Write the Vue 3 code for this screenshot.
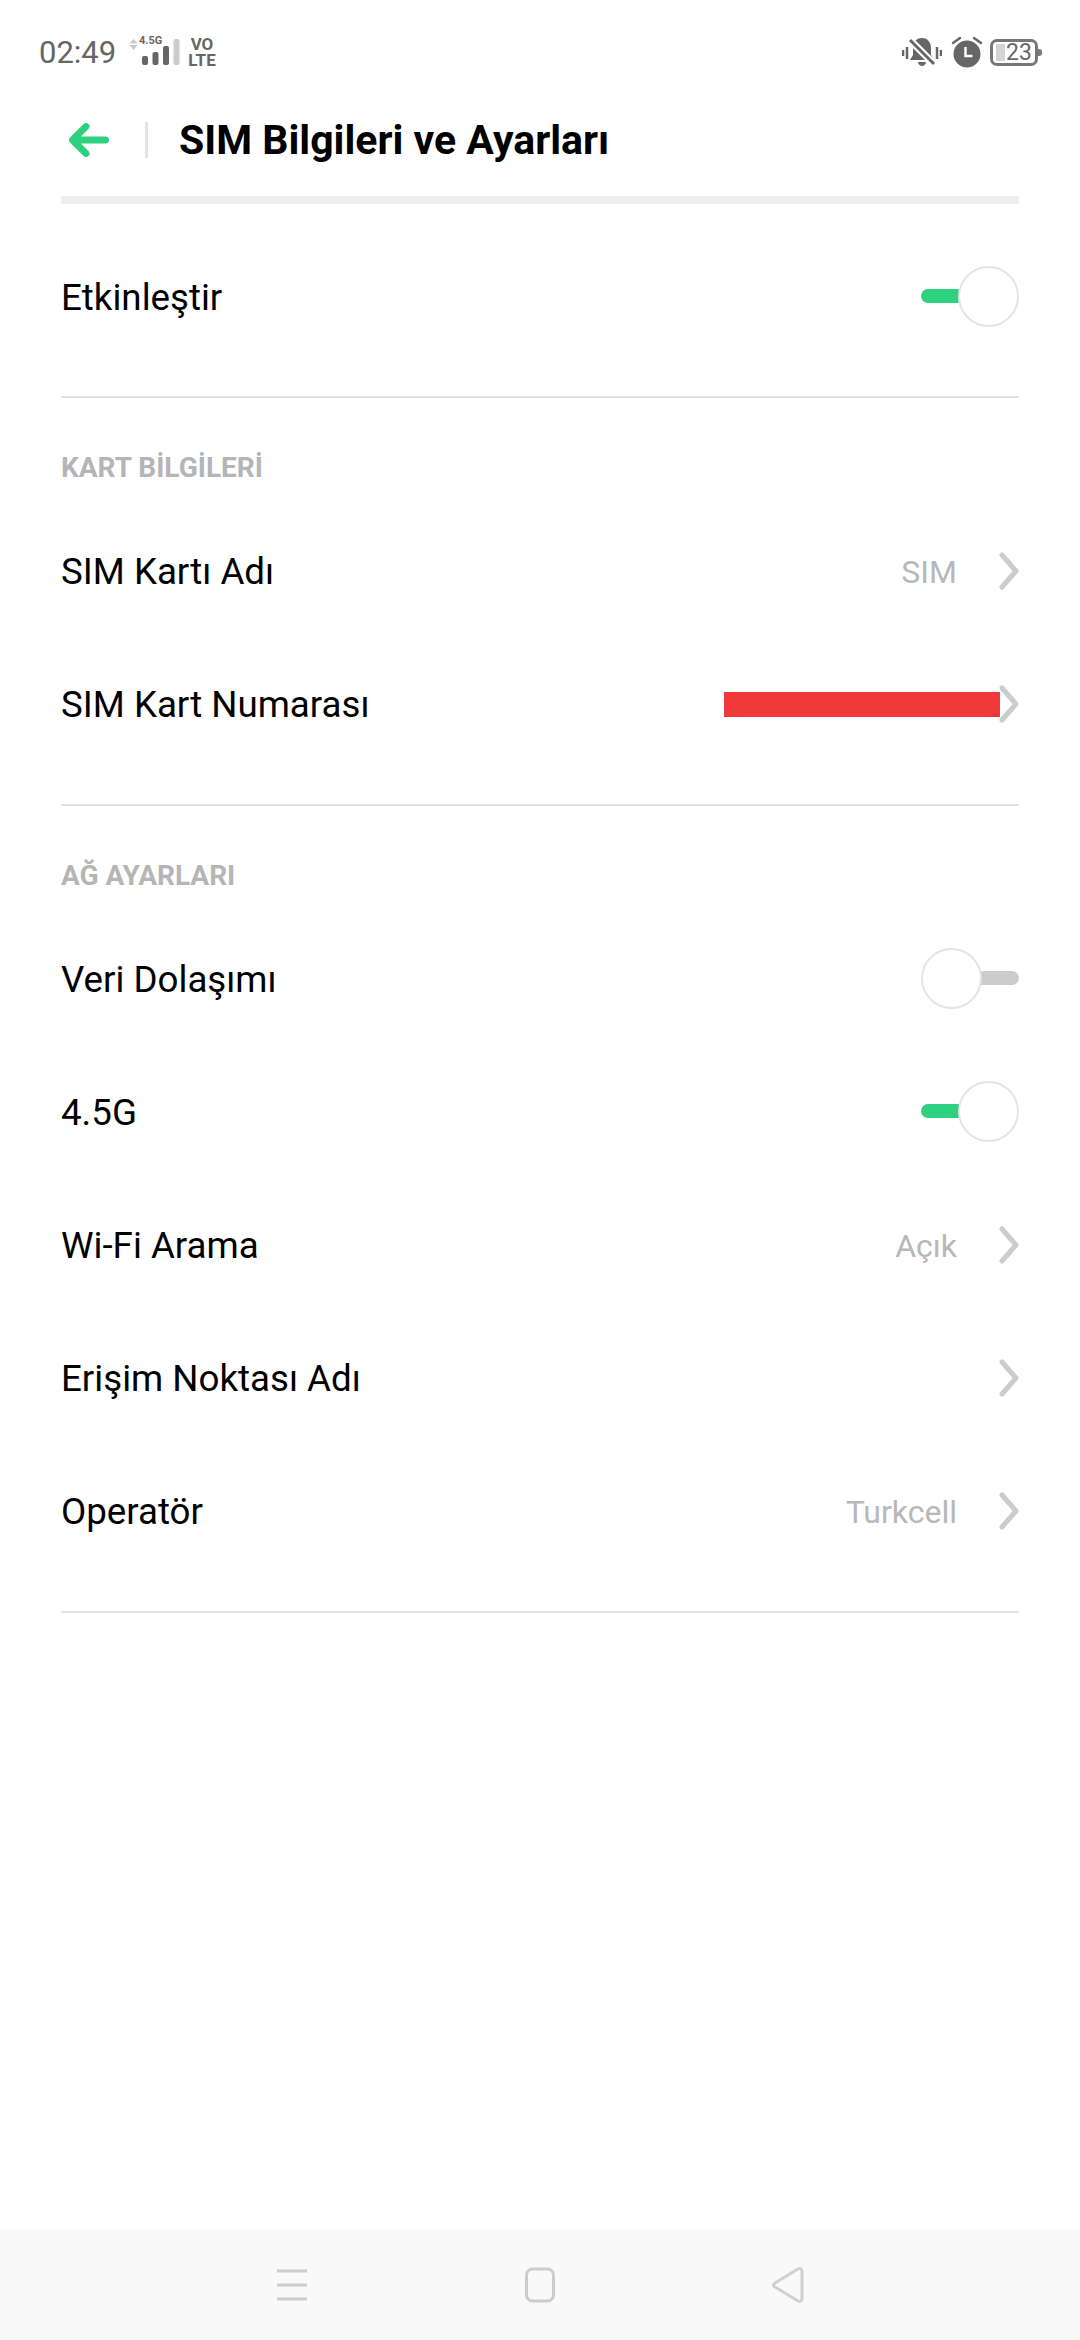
<template>
  <div class="screen">
    <div class="status-bar">
      <span class="time">02:49</span>
      <svg class="net" width="90" height="38" viewBox="0 0 90 38">
        <path d="M4.500 5 8.500 9.500H.5zM4.500 16 .5 11h8z" fill="#c9c9c9" />
        <text x="10" y="10" class="net-type">4.5G</text>
        <rect x="13" y="22" width="6" height="9" rx="2" fill="#666" />
        <rect x="23.500" y="18" width="6" height="13" rx="2" fill="#666" />
        <rect x="34" y="12" width="6" height="19" rx="2" fill="#666" />
        <rect x="44.500" y="5" width="6" height="26" rx="2" fill="#ccc" />
        <text x="73" y="16" class="volte" text-anchor="middle">VO</text>
        <text x="73" y="32" class="volte" text-anchor="middle">LTE</text>
      </svg>
      <div class="status-right">
        <svg width="40" height="32" viewBox="0 0 40 32">
          <path d="M20 2c6 0 9 5 9 10v7l3 5H8l3-5v-7c0-5 3-10 9-10zM16 26h8c0 2-2 4-4 4s-4-2-4-4z" fill="#666" />
          <path d="M9 5 32 28" stroke="#fff" stroke-width="7" />
          <path d="M8 4 32 28" stroke="#666" stroke-width="3" />
          <path d="M1 14v6M5 11v12M35 11v12M39 14v6" stroke="#666" stroke-width="2.500" />
        </svg>
        <svg class="clock" width="32" height="32" viewBox="0 0 32 32">
          <circle cx="16" cy="18" r="13.500" fill="#666" />
          <path d="M14.500 11v9h7" fill="none" stroke="#fff" stroke-width="2.500" />
          <path d="M2 7 9 2M23 2l7 5" stroke="#666" stroke-width="2.500" stroke-linecap="round" />
        </svg>
        <div class="battery">
          <span class="battery-fill"></span>
          <span class="battery-num">23</span>
        </div>
      </div>
    </div>

    <header class="title-bar">
      <svg class="back" width="40" height="34" viewBox="0 0 40 34">
        <path d="M36.500 17H4M17 3.500 3.500 17 17 30.500" fill="none" stroke="#2ed180" stroke-width="7" stroke-linecap="round" stroke-linejoin="round" />
      </svg>
      <span class="title-sep"></span>
      <h1 class="title">SIM Bilgileri ve Ayarları</h1>
    </header>
    <div class="thick-rule"></div>

    <section class="first-group">
      <div class="row">
        <span class="row-label">Etkinleştir</span>
        <span class="switch on"><i class="track"></i><i class="knob"></i></span>
      </div>
    </section>

    <section v-for="group in groups" :key="group.title" class="group">
      <h2 class="group-title">{{ group.title }}</h2>
      <div v-for="item in group.items" :key="item.label" class="row">
        <span class="row-label">{{ item.label }}</span>
        <span v-if="item.redacted" class="redacted"></span>
        <span v-else-if="item.value" class="row-value">{{ item.value }}</span>
        <span v-if="item.toggle" class="switch" :class="item.toggle"><i class="track"></i><i class="knob"></i></span>
        <svg v-else class="chevron" width="20" height="38" viewBox="0 0 20 38">
          <path d="M3 3 17 19 3 35" fill="none" stroke="#ccc" stroke-width="5" stroke-linecap="round" stroke-linejoin="round" />
        </svg>
      </div>
    </section>

    <nav class="nav-bar">
      <svg width="32" height="34" viewBox="0 0 32 34">
        <path d="M1 3h30M1 17h30M1 31h30" stroke="#ccc" stroke-width="3" />
      </svg>
      <svg width="30" height="36" viewBox="0 0 30 36">
        <rect x="1.500" y="2" width="27" height="32" rx="6" fill="none" stroke="#ccc" stroke-width="3" />
      </svg>
      <svg width="32" height="40" viewBox="0 0 32 40">
        <path d="M30 6c0-2-2-3-4-2L3 18c-2 1-2 3 0 4l23 14c2 1 4 0 4-2z" fill="none" stroke="#d0d0d0" stroke-width="3" stroke-linejoin="round" />
      </svg>
    </nav>
  </div>
</template>

<script setup>
const groups = [
  {
    title: 'KART BİLGİLERİ',
    items: [
      { label: 'SIM Kartı Adı', value: 'SIM' },
      { label: 'SIM Kart Numarası', redacted: true }
    ]
  },
  {
    title: 'AĞ AYARLARI',
    items: [
      { label: 'Veri Dolaşımı', toggle: 'off' },
      { label: '4.5G', toggle: 'on' },
      { label: 'Wi-Fi Arama', value: 'Açık' },
      { label: 'Erişim Noktası Adı' },
      { label: 'Operatör', value: 'Turkcell' }
    ]
  }
];
</script>

<style>
html,
body {
  background: #fff;
}
</style>

<style scoped>
.screen {
  position: relative;
  width: 1080px;
  height: 2340px;
  background: #fff;
  font-family: Roboto, "Noto Sans", sans-serif;
  overflow: hidden;
  display: flex;
  flex-direction: column;
}

.status-bar {
  height: 100px;
  flex: none;
  display: flex;
  align-items: center;
  padding: 4px 38px 0 39px;
  box-sizing: border-box;
  color: #666;
}

.time {
  font-size: 31px;
  line-height: 36px;
  margin-top: 2px;
}

.net {
  margin-left: 13px;
  margin-top: 2px;
}

.net-type {
  font-size: 11px;
  font-weight: 700;
  fill: #666;
}

.volte {
  font-size: 17px;
  font-weight: 700;
  fill: #666;
}

.status-right {
  margin-left: auto;
  display: flex;
  align-items: center;
  gap: 9px;
}

.clock {
  margin-right: -2px;
}

.battery {
  position: relative;
  width: 48px;
  height: 27px;
  border: 3px solid #777;
  border-radius: 7px;
  box-sizing: border-box;
  display: flex;
  align-items: center;
  padding-left: 3px;
  margin-right: 4px;
}

.battery::after {
  content: "";
  position: absolute;
  right: -7px;
  top: 7px;
  width: 4px;
  height: 7px;
  background: #777;
  border-radius: 0 3px 3px 0;
}

.battery-fill {
  width: 9px;
  height: 17px;
  background: #d4d4d4;
  flex: none;
}

.battery-num {
  font-size: 23px;
  line-height: 21px;
  color: #666;
  margin-left: 1px;
}

.title-bar {
  height: 80px;
  flex: none;
  display: flex;
  align-items: center;
  padding-left: 69px;
}

.back {
  flex: none;
}

.title-sep {
  width: 3px;
  height: 36px;
  background: #e3e3e3;
  margin-left: 36px;
}

.title {
  margin: 0 0 0 31px;
  font-size: 41px;
  font-weight: 700;
  color: #000;
}

.thick-rule {
  flex: none;
  height: 8px;
  margin: 16px 61px 0;
  background: #eee;
}

.first-group {
  flex: none;
  margin: 0 61px;
  padding: 27px 0 32px;
  border-bottom: 2px solid #e3e3e3;
}

.group {
  flex: none;
  margin: 0 61px;
  padding: 50px 0 33px;
  border-bottom: 2px solid #e3e3e3;
}

.group-title {
  margin: 0 0 17px;
  font-size: 28px;
  line-height: 40px;
  font-weight: 700;
  color: #b5b5b5;
}

.row {
  height: 133px;
  display: flex;
  align-items: center;
}

.row-label {
  flex: 1;
  font-size: 36.7px;
  color: #000;
}

.row-value {
  font-size: 32px;
  color: #b8b8b8;
  margin-right: 42px;
}

.redacted {
  width: 276px;
  height: 25px;
  background: #ef3939;
  margin-right: -1px;
  position: relative;
  z-index: 1;
}

.chevron {
  flex: none;
  margin-top: -2px;
}

.switch {
  position: relative;
  width: 98px;
  height: 61px;
  flex: none;
  margin-top: -3px;
}

.track {
  position: absolute;
  top: 23px;
  height: 14px;
  width: 50px;
  border-radius: 7px;
}

.knob {
  position: absolute;
  top: 0;
  width: 61px;
  height: 61px;
  box-sizing: border-box;
  border-radius: 50%;
  background: #fff;
  border: 2px solid #e4e4e4;
}

.switch.on .track {
  left: 0;
  background: #2ed180;
}

.switch.on .knob {
  right: 0;
}

.switch.off .track {
  right: 0;
  background: #ccc;
}

.switch.off .knob {
  left: 0;
}

.nav-bar {
  margin-top: auto;
  height: 111px;
  flex: none;
  background: #f9f9f9;
  display: grid;
  grid-template-columns: repeat(3, 40px);
  column-gap: 208px;
  justify-content: center;
  justify-items: center;
  align-items: center;
}
</style>
